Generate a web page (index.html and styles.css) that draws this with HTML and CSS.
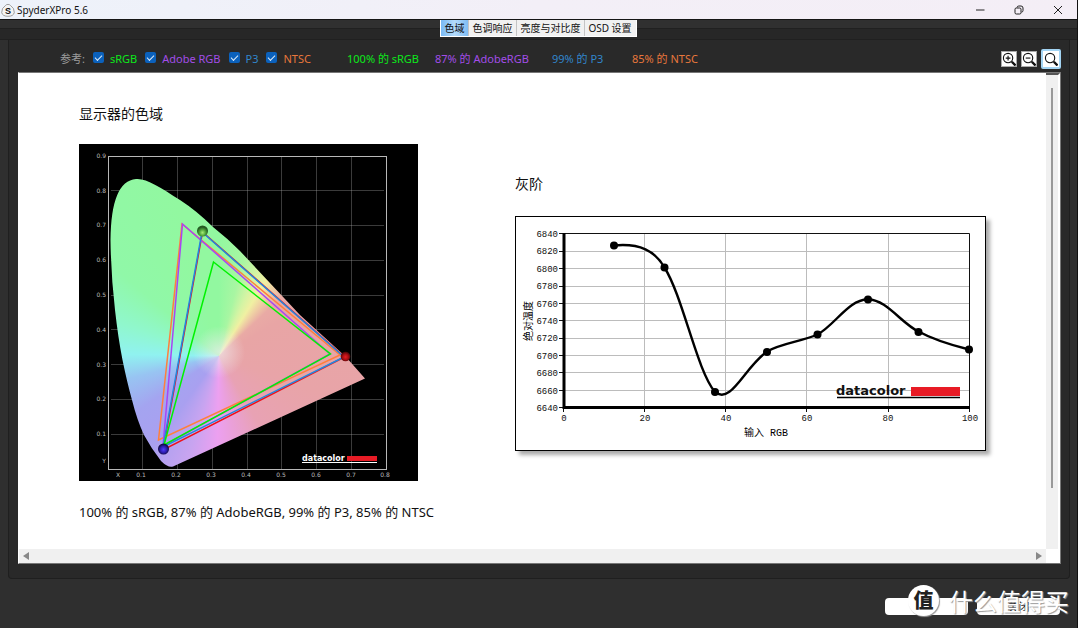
FILE: index.html
```html
<!DOCTYPE html>
<html lang="zh-CN">
<head>
<meta charset="utf-8">
<title>SpyderXPro 5.6</title>
<link rel="stylesheet" href="styles.css">
</head>
<body>
<div class="window">
  <header class="titlebar">
    <svg class="app-icon" width="14" height="14" viewBox="0 0 14 14" aria-hidden="true">
      <path d="M4.5 2.5a2.8 2 0 0 1 5 0Q13.5 5 13.3 9.500Q12.500 13.300 7 13.300T.7 9.500Q.5 5 4.500 2.500Z" fill="#f4f4f4" stroke="#888" stroke-width=".8"/>
      <text x="7" y="11" class="app-letter">S</text>
    </svg>
    <h1 class="title">SpyderXPro 5.6</h1>
    <div class="window-buttons">
      <button aria-label="最小化"><svg width="10" height="10" viewBox="0 0 10 10"><path d="M1 5h8.500"/></svg></button>
      <button aria-label="还原"><svg width="10" height="10" viewBox="0 0 10 10"><rect x="1" y="3" width="6" height="6" rx="1.300"/><path d="M3 2.500Q3.200 1 4.800 1H7Q9 1 9 3v2.500Q9 7 7.500 7.200"/></svg></button>
      <button aria-label="关闭窗口"><svg width="10" height="10" viewBox="0 0 10 10"><path d="M1 1l8 8M9 1l-8 8"/></svg></button>
    </div>
  </header>

  <div class="tabstrip">
    <nav class="tabs">
      <button class="tab active">色域</button>
      <button class="tab">色调响应</button>
      <button class="tab">亮度与对比度</button>
      <button class="tab">OSD 设置</button>
    </nav>
  </div>

  <main class="panel">
    <div class="toolbar">
      <div class="refs">
        <span class="refs-label">参考:</span>
        <label class="srgb"><input type="checkbox" checked>sRGB</label>
        <label class="adobe"><input type="checkbox" checked>Adobe RGB</label>
        <label class="p3"><input type="checkbox" checked>P3</label>
        <label class="ntsc"><input type="checkbox" checked>NTSC</label>
      </div>
      <div class="results">
        <span class="srgb">100% 的 sRGB</span>
        <span class="adobe">87% 的 AdobeRGB</span>
        <span class="p3">99% 的 P3</span>
        <span class="ntsc">85% 的 NTSC</span>
      </div>
      <div class="zooms">
        <button class="zoom" aria-label="放大"><svg width="14" height="14" viewBox="0 0 15 15"><circle cx="6.500" cy="6.500" r="5"/><path d="M4 6.500h5M6.500 4v5"/><path class="handle" d="M10.500 10.500l4 4"/></svg></button>
        <button class="zoom" aria-label="缩小"><svg width="14" height="14" viewBox="0 0 15 15"><circle cx="6.500" cy="6.500" r="5"/><path d="M4 6.500h5"/><path class="handle" d="M10.500 10.500l4 4"/></svg></button>
        <button class="zoom selected" aria-label="适合窗口"><svg width="14" height="14" viewBox="0 0 15 15"><circle cx="6.500" cy="6.500" r="5"/><path class="handle" d="M10.500 10.500l4 4"/></svg></button>
      </div>
    </div>

    <div class="viewport">
      <div class="report">
        <section class="gamut">
          <h2>显示器的色域</h2>
          <svg class="gamut-chart" width="339" height="337" viewBox="79 144 339 337" role="img" aria-label="色域">
            <defs>
              <clipPath id="locus"><path d="M136 179C146 178 160 187 180 200Q197 211 213 227Q227 238 240 251L300 315L346 357L365 378.500L173 466.500Q168 468 161 461Q151 448 144 435Q137 420 132 400Q127 382 122.500 360Q118 337 115 310Q111 276 110.500 240Q111 181 136 179Z"/></clipPath>
              <radialGradient id="ballG" cx=".5" cy=".65"><stop offset="0" stop-color="#a5ec75"/><stop offset=".55" stop-color="#4fa53c"/><stop offset="1" stop-color="#245c22"/></radialGradient>
              <radialGradient id="ballR" cx=".5" cy=".55"><stop offset="0" stop-color="#e81c22"/><stop offset=".6" stop-color="#a80c12"/><stop offset="1" stop-color="#52080a"/></radialGradient>
              <radialGradient id="ballB" cx=".5" cy=".55"><stop offset="0" stop-color="#503cff"/><stop offset=".6" stop-color="#2b1cab"/><stop offset="1" stop-color="#100a40"/></radialGradient>
            </defs>
            <rect x="79" y="144" width="339" height="337"/>
            <path class="grid" d="M142.500 156V469M177.500 156V469M212.500 156V469M247.500 156V469M281.500 156V469M316.500 156V469M351.500 156V469M111 190.500H384M111 225.500H384M111 260.500H384M111 295.500H384M111 329.500H384M111 364.500H384M111 399.500H384M111 434.500H384"/>
            <g clip-path="url(#locus)"><foreignObject x="79" y="144" width="339" height="337"><div class="spectrum"></div></foreignObject></g>
            <rect class="frame" x="108.500" y="156.500" width="278" height="313"/>
            <g class="axis end">
              <text x="106" y="158">0.9</text><text x="106" y="193">0.8</text><text x="106" y="227">0.7</text><text x="106" y="262">0.6</text><text x="106" y="297">0.5</text><text x="106" y="332">0.4</text><text x="106" y="367">0.3</text><text x="106" y="401">0.2</text><text x="106" y="436">0.1</text><text x="106" y="463">Y</text>
            </g>
            <g class="axis middle">
              <text x="118" y="477">X</text><text x="141" y="477">0.1</text><text x="176" y="477">0.2</text><text x="211" y="477">0.3</text><text x="246" y="477">0.4</text><text x="281" y="477">0.5</text><text x="316" y="477">0.6</text><text x="351" y="477">0.7</text><text x="385" y="477">0.8</text>
            </g>
            <g class="triangles">
              <path stroke="#ee1018" d="M202.500 232L344.500 357L163 450Z"/>
              <path stroke="#ff7f3c" d="M182 224L340 355L158.500 440Z"/>
              <path stroke="#a845f5" d="M182.500 224L330 354L163 446Z"/>
              <path stroke="#2188e0" d="M202 232L344 357L163 447Z"/>
              <path stroke="#00f200" d="M213.500 262L330.500 354L164 445Z"/>
            </g>
            <circle cx="202.500" cy="231" r="5.500" fill="url(#ballG)"/>
            <circle cx="345.500" cy="356.500" r="4.800" fill="url(#ballR)"/>
            <circle cx="163.500" cy="449" r="5.500" fill="url(#ballB)"/>
            <text class="logo-small" x="302" y="461">datacolor</text>
            <rect x="347" y="456" width="30" height="5" fill="#e81b25"/>
            <path d="M302 462.500H377" stroke="#fff"/>
          </svg>
          <p>100% 的 sRGB, 87% 的 AdobeRGB, 99% 的 P3, 85% 的 NTSC</p>
        </section>

        <section class="grayscale">
          <h2>灰阶</h2>
          <svg class="gray-chart" width="471" height="235" viewBox="515 216 471 235" role="img" aria-label="灰阶">
            <rect x="515.500" y="216.500" width="470" height="234" fill="#fff" stroke="#000"/>
            <path class="gray-grid" d="M644.500 234V407M725.500 234V407M806.500 234V407M888.500 234V407M564 251.500H969M564 268.500H969M564 286.500H969M564 303.500H969M564 320.500H969M564 338.500H969M564 355.500H969M564 372.500H969M564 390.500H969"/>
            <path class="thin" d="M564 233.500H969.500V408"/>
            <path class="thin" d="M559 233.500h4M559 251.500h4M559 268.500h4M559 286.500h4M559 303.500h4M559 320.500h4M559 338.500h4M559 355.500h4M559 372.500h4M559 390.500h4M559 407.500h4M563.500 408v4M644.500 408v4M725.500 408v4M806.500 408v4M888.500 408v4M969.500 408v4"/>
            <path class="thick" d="M564 233V407.500H970"/>
            <g class="ticks end">
              <text x="558" y="237">6840</text><text x="558" y="254">6820</text><text x="558" y="272">6800</text><text x="558" y="289">6780</text><text x="558" y="307">6760</text><text x="558" y="324">6740</text><text x="558" y="341">6720</text><text x="558" y="359">6700</text><text x="558" y="376">6680</text><text x="558" y="394">6660</text><text x="558" y="411">6640</text>
            </g>
            <g class="ticks middle">
              <text x="564" y="421">0</text><text x="645" y="421">20</text><text x="726" y="421">40</text><text x="807" y="421">60</text><text x="888" y="421">80</text><text x="970" y="421">100</text>
            </g>
            <text class="axis-title" x="766" y="436">输入 RGB</text>
            <text class="axis-title" transform="translate(532 321) rotate(-90)">绝对温度</text>
            <path class="curve" d="M614 245.500C640 243 655 251 664.500 267.500C683 297 697 371 715 392C731 405 744 368 767 351.500C782 343 800 342 817.500 334.500C835 325 849 299 868 299.500C886 299 902 324 918.500 331.500C934 340 951 345 969 349.500"/>
            <g><circle cx="614" cy="245.500" r="4"/><circle cx="664.500" cy="267.500" r="4"/><circle cx="715" cy="392" r="4"/><circle cx="767" cy="352" r="4"/><circle cx="817.500" cy="334.500" r="4"/><circle cx="868" cy="299.500" r="4"/><circle cx="918.500" cy="332" r="4"/><circle cx="969" cy="349.500" r="4"/></g>
            <text class="logo" x="836" y="395">datacolor</text>
            <rect x="911" y="387" width="49" height="9" fill="#e81b25"/>
            <path d="M837 397.500H960" stroke="#000" stroke-width="1.500"/>
          </svg>
        </section>
      </div>
      <div class="vbar"><span class="thumb"></span></div>
      <div class="hbar">
        <svg width="6" height="8" viewBox="0 0 6 8"><path d="M6 0v8L0 4Z"/></svg>
        <svg width="6" height="8" viewBox="0 0 6 8"><path d="M0 0v8L6 4Z"/></svg>
      </div>
      <div class="corner"></div>
    </div>
  </main>

  <footer class="footer">
    <button class="action">打印</button>
    <button class="action">关闭</button>
    <div class="watermark"><span class="badge">值</span><span class="brand">什么值得买</span></div>
  </footer>
</div>
</body>
</html>
```
FILE: styles.css
```css
* { box-sizing: border-box; }
body {
  margin: 0;
  padding-right: 2px;
  background: #fff;
  font: 11px/16px "Noto Sans", "Noto Sans CJK SC", sans-serif;
}
button { font: inherit; padding: 0; border: 0; }
h1, h2, p { margin: 0; font-weight: 400; }

.window {
  min-height: 100vh;
  display: flex;
  flex-direction: column;
  background: #2f2f2f;
  border-right: 1px solid #111;
}

/* Title bar */
.titlebar {
  height: 19px;
  display: flex;
  align-items: center;
  gap: 2px;
  padding-left: 1px;
  background: linear-gradient(90deg, #edf2fa, #f3eff7 50%, #f4eef6);
}
.title { font-size: 10px; color: #111; }
.app-letter { font: bold 9px "Liberation Sans", sans-serif; text-anchor: middle; fill: #111; }
.window-buttons { margin-left: auto; display: flex; }
.window-buttons button { width: 39px; height: 19px; display: grid; place-items: center; background: none; }
.window-buttons svg { fill: none; stroke: #222; stroke-width: 1; }

/* Tabs */
.tabstrip {
  height: 21px;
  display: flex;
  justify-content: center;
  align-items: flex-start;
  border-top: 1px solid #151515;
  border-bottom: 1px solid #202020;
  background: linear-gradient(#303030 8px, #202020 8px, #202020 9px, #272727 9px);
}
.tabs { display: flex; height: 17px; border: 1px solid #fff; border-top: 0; background: #f1f1f1; }
.tab { height: 16px; padding: 0 4px 0 3px; font-size: 10px; line-height: 15px; color: #111; background: #f1f1f1; border-right: 1px solid #c4c4c4; }
.tab:last-child { border-right: 0; }
.tab.active { background: linear-gradient(90deg, #78b9f4, #b4dbfb 50%, #80bdf5); }

/* Panel */
.panel {
  flex: 1;
  display: flex;
  flex-direction: column;
  margin: 0 7px 0 8px;
  padding: 0 8px 14px 9px;
  background: #292929;
  border: 1px solid #1f1f1f;
  border-top: 0;
  border-radius: 0 0 4px 4px;
}
.toolbar { height: 32px; display: flex; align-items: center; padding: 6px 0 0 42px; }
.refs { display: flex; gap: 8px; width: 287px; white-space: nowrap; }
.refs-label { color: #9c9c9c; }
.refs label { display: flex; gap: 6px; }
.refs input {
  appearance: none;
  width: 11px;
  height: 11px;
  margin: 1px 0 0;
  border-radius: 2px;
  background: #0b61bc;
  display: grid;
  justify-content: center;
}
.refs input::after {
  content: "";
  width: 6px;
  height: 3px;
  margin-top: 3px;
  border: solid #dcebfa;
  border-width: 0 0 1px 1px;
  rotate: -45deg;
}
.results { display: grid; grid-template-columns: 88px 117px 80px 70px; white-space: nowrap; }
.srgb { color: #0ce81b; }
.adobe { color: #a34de8; }
.p3 { color: #3186cc; }
.ntsc { color: #e8773c; }
.zooms { margin-left: auto; display: flex; align-items: center; gap: 4px; }
.zoom { width: 16px; height: 16px; display: grid; place-items: center; background: #fff; border: 1px solid #aaa; }
.zoom.selected { width: 20px; height: 20px; border: 2px solid #a3d4f3; border-radius: 2px; }
.zoom svg { fill: none; stroke: #111; stroke-width: 1.2; }
.zoom .handle { stroke-width: 2.5; }

/* Scrollable report */
.viewport {
  flex: 1;
  display: grid;
  grid-template-columns: 1fr 14px;
  grid-template-rows: 1fr 14px;
  background: #fff;
  border: 1px solid #777;
  border-left-color: #fff;
}
.report { display: flex; padding-left: 60px; color: #111; }
.gamut { width: 436px; padding-top: 31px; }
.grayscale { padding-top: 101px; }
h2 { font-size: 14px; line-height: 20px; white-space: nowrap; }
.gamut p { font-size: 13px; line-height: 22px; white-space: nowrap; }
.gamut-chart { display: block; margin: 20px 0; }
.gray-chart { display: block; margin-top: 22px; box-shadow: 4px 4px 4px #aaa; }
.vbar { background: #f0f0f0; border-right: 2px solid #fff; border-top: 2px solid #555; display: flex; justify-content: center; padding: 13px 0 61px; }
.thumb { width: 2px; background: #999; }
.hbar { background: #f0f0f0; display: flex; justify-content: space-between; align-items: center; padding: 0 4px; }
.hbar svg { fill: #888; }
.corner { background: #fff; }

/* Gamut chart */
.spectrum {
  width: 100%;
  height: 100%;
  background:
    radial-gradient(circle at 140px 208px, rgba(240, 236, 240, .7), rgba(240, 236, 240, 0) 26px),
    conic-gradient(from 0deg at 140px 212px, #92f8a0, #a8f6a2 14deg, #d4f4a4 24deg, #f0f0a2 32deg, #efd2a4 38deg, #e9aaa5 47deg, #e8a5a5 60deg, #e8a4a8 110deg, #e8a2b4 150deg, #eaa0da 170deg, #eca0f0 181deg, #c8a4f0 197deg, #a9a0f0 216deg, #a4a4f0 236deg, #98c4f2 256deg, #90f2f0 271deg, #90f7cd 288deg, #90f8a8 310deg, #92f8a0 345deg, #92f8a0);
}
.grid { stroke: #aaa; stroke-opacity: .35; fill: none; }
.frame { fill: none; stroke: #b8b8b8; }
.axis { font: 6px "DejaVu Sans", sans-serif; fill: #bbb; }
.end { text-anchor: end; }
.middle { text-anchor: middle; }
.triangles { fill: none; stroke-width: 1.5; }
.logo-small { font: bold 8px "DejaVu Sans", sans-serif; fill: #fff; }

/* Grayscale chart */
.gray-grid { stroke: #bcbcbc; }
.thin { fill: none; stroke: #111; }
.thick { fill: none; stroke: #000; stroke-width: 3; }
.ticks { font: 9px "Liberation Mono", monospace; fill: #111; }
.axis-title { font: 10px "Liberation Mono", "Noto Sans CJK SC", monospace; text-anchor: middle; fill: #000; }
.curve { fill: none; stroke: #000; stroke-width: 2.4; }
.logo { font: bold 13px "DejaVu Sans", sans-serif; fill: #111; }

/* Footer */
.footer { position: relative; display: flex; justify-content: flex-end; align-items: flex-start; gap: 9px; height: 49px; padding: 19px 17px 0 0; }
.action { width: 83px; height: 17px; border-radius: 4px; background: #fff; color: #222; line-height: 15px; }
.watermark { position: absolute; right: 8px; top: 6px; display: flex; align-items: center; gap: 10px; color: #fff; pointer-events: none; }
.badge { width: 31px; height: 31px; border-radius: 50%; background: #fff; color: #222; font: 900 20px/30px "Noto Sans CJK SC", sans-serif; text-align: center; box-shadow: 1px 1px 1px #999; }
.brand { font: 24px/31px "Noto Sans CJK SC", sans-serif; text-shadow: 1px 1px 1px #999; }
```
